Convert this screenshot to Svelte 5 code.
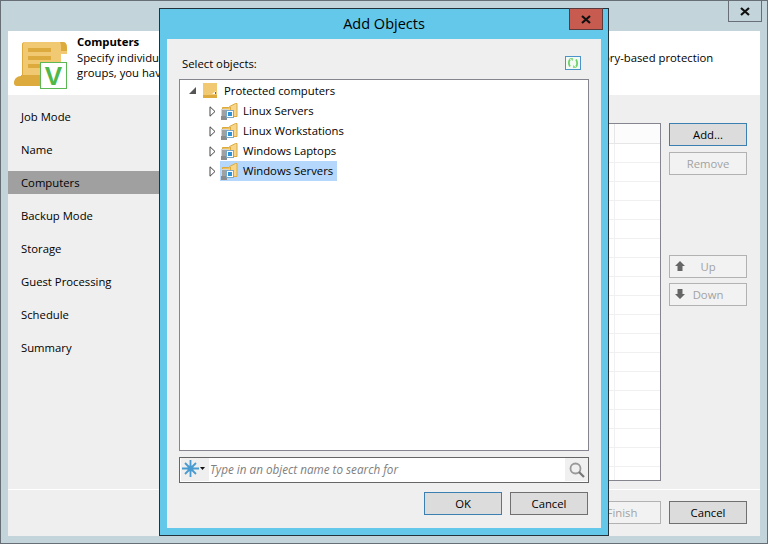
<script>
  const steps = ['Job Mode', 'Name', 'Computers', 'Backup Mode', 'Storage', 'Guest Processing', 'Schedule', 'Summary'];
  const active = 'Computers';
  const groups = ['Linux Servers', 'Linux Workstations', 'Windows Laptops', 'Windows Servers'];
  const rows = Array.from({ length: 18 });
</script>

<div class="window">
  <button class="win-close" aria-label="Close">
    <svg width="10" height="9" viewBox="0 0 10 9"><path d="M1 1l8 7M9 1l-8 7" stroke="#111" stroke-width="2.2" fill="none" /></svg>
  </button>

  <header class="head">
    <svg class="logo" width="56" height="50" viewBox="0 0 56 50">
      <path d="M12 2h38c3 0 4 3 4 6v6h-6v26H9V5c0-2 1-3 3-3z" fill="#f0c972" />
      <path d="M9 5c0-2 1-3 3-3h36c-1 0 -2 0-2 0H12c-1 0-2 1-2 3v33H9z" fill="#dcaa3d" />
      <path d="M47 2h3c3 0 4 3 4 6v3h-6V6c0-2-1-4-1-4z" fill="#dcaa3d" />
      <path d="M1 43c0-4 3-7 7-7v-1h32v11H4c-2 0-3-1-3-3z" fill="#dcaa3d" />
      <path d="M15 8h23v4H15zM15 16h23v4H15zM15 24h14v4H15z" fill="#dcaa3d" />
      <rect x="27.500" y="22.500" width="26" height="26" fill="#fff" stroke="#5bb852" />
      <text x="40.500" y="45" class="logo-v">V</text>
    </svg>
    <div class="head-text">
      <h1>Computers</h1>
      <p>Specify individual computers, Active Directory items or protection groups to back up. In Active Directory-based protection</p>
      <p>groups, you have to select the whole directory container.</p>
    </div>
  </header>

  <div class="body">
    <nav>
      {#each steps as s}
        <div class="step" class:on={s === active}>{s}</div>
      {/each}
    </nav>
    <main>
      <div class="table">
        <div class="trow thead"><div class="cell"></div></div>
        {#each rows as _}
          <div class="trow"><div class="cell"></div></div>
        {/each}
      </div>
      <div class="side">
        <button class="btn focus">Add...</button>
        <button class="btn off">Remove</button>
        <div class="move">
          <button class="btn off arrow">
            <svg width="10" height="10" viewBox="0 0 10 10"><path d="M5 0l5 5H7.500v5h-5V5H0z" fill="#666" /></svg>
            Up
          </button>
          <button class="btn off arrow">
            <svg width="10" height="10" viewBox="0 0 10 10"><path d="M5 10l5-5H7.500V0h-5v5H0z" fill="#666" /></svg>
            Down
          </button>
        </div>
      </div>
    </main>
  </div>

  <footer class="foot">
    <button class="btn off">Finish</button>
    <button class="btn">Cancel</button>
  </footer>

  <div class="dialog">
    <div class="title">Add Objects</div>
    <button class="dlg-close" aria-label="Close">
      <svg width="10" height="9" viewBox="0 0 10 9"><path d="M1 1l8 7M9 1l-8 7" stroke="#111" stroke-width="2.2" fill="none" /></svg>
    </button>
    <div class="panel">
      <div class="label-row">
        <span>Select objects:</span>
        <svg class="refresh" width="16" height="14" viewBox="0 0 16 14">
          <rect x="0.500" y="0.500" width="15" height="13" fill="#f4fbf4" stroke="#4b93c9" />
          <path d="M5 3.500C3.500 5 3.500 8.500 5 10.500M11 3.500C12.500 5.500 12.500 9 11 10.500" stroke="#6fd06a" stroke-width="1.800" fill="none" />
          <path d="M4 2h4v3zM12 12H8V9z" fill="#8fdc8a" />
        </svg>
      </div>

      <div class="tree">
        <div class="node root">
          <svg class="exp" width="7" height="7" viewBox="0 0 7 7"><path d="M7 0v7H0z" fill="#555" /></svg>
          <svg class="root-ic" width="14" height="15" viewBox="0 0 14 15">
            <rect width="14" height="12" fill="#f0c972" />
            <rect y="12" width="14" height="3" fill="#dcaa3d" />
            <path d="M9 11l4-3v3z" fill="#fff" />
            <path d="M12 9h1v2h-1z" fill="#666" />
          </svg>
          <span>Protected computers</span>
        </div>
        {#each groups as g}
          <div class="node child">
            <svg class="tri" width="7" height="11" viewBox="0 0 7 11"><path d="M1 .8L6 5.500 1 10.200z" fill="#fff" stroke="#444" /></svg>
            <div class="label" class:sel={g === 'Windows Servers'}>
              <svg width="17" height="17" viewBox="0 0 17 17">
                <path d="M1.500 4.500h6l1-1 6-3h1.500v13h-14.500z" fill="#f6d68c" stroke="#dcaa3d" />
                <path d="M1.500 5h7l1-1v10" stroke="#dcaa3d" fill="none" />
                <rect x="0" y="6" width="6" height="11" fill="#8c8c8c" />
                <rect x="0" y="6" width="6" height="7" fill="#d4d4d4" />
                <path d="M1 8h4M1 10h4M1 12h4" stroke="#6f6f6f" />
                <rect x="5" y="7" width="8" height="8" fill="#fff" stroke="none" />
                <rect x="5.500" y="7.500" width="7" height="7" fill="#fff" stroke="#7fa8c4" />
                <rect x="7" y="9" width="4" height="4" fill="#2f93d6" />
              </svg>
              <span>{g}</span>
            </div>
          </div>
        {/each}
      </div>

      <div class="search">
        <div class="scope">
          <svg width="17" height="17" viewBox="0 0 17 17">
            <path d="M8.500 0v17M0 8.500h17M3 3l11 11M14 3L3 14" stroke="#4a9bd0" stroke-width="1.800" fill="none" />
            <circle cx="8.500" cy="8.500" r="3" fill="#4a9bd0" />
          </svg>
          <svg width="5" height="3" viewBox="0 0 5 3"><path d="M0 0h5L2.500 3z" fill="#111" /></svg>
        </div>
        <input placeholder="Type in an object name to search for" />
        <div class="go">
          <svg width="16" height="16" viewBox="0 0 16 16">
            <circle cx="6.500" cy="6.500" r="5" fill="none" stroke="#999" stroke-width="1.800" />
            <path d="M10 10l5 5" stroke="#777" stroke-width="2.200" />
          </svg>
        </div>
      </div>

      <div class="actions">
        <button class="btn focus">OK</button>
        <button class="btn">Cancel</button>
      </div>
    </div>
  </div>
</div>

<style>
  :global(body) {
    margin: 0;
    font-family: "Open Sans", "Noto Sans", sans-serif;
    font-size: 11.3px;
    color: #000;
  }
  .window {
    position: relative;
    width: 768px;
    height: 544px;
    box-sizing: border-box;
    padding: 30px 7px 7px;
    background: #c3d5da;
    border: 1px solid #686e75;
    overflow: hidden;
  }
  .win-close {
    position: absolute;
    top: -1px;
    right: 5px;
    width: 34px;
    height: 22px;
    padding: 0;
    display: flex;
    align-items: center;
    justify-content: center;
    background: transparent;
    border: 1px solid #686e75;
  }
  .head {
    height: 64px;
    background: #fff;
    display: flex;
  }
  .logo {
    flex: none;
    margin: 9px 0 0 5px;
  }
  .logo-v {
    font: bold 26px "Liberation Sans", sans-serif;
    fill: #4fb848;
    text-anchor: middle;
  }
  .head-text {
    margin-left: 8px;
    padding-top: 3px;
    white-space: nowrap;
  }
  h1 {
    margin: 0;
    font-size: 11.3px;
    line-height: 16px;
    font-weight: 700;
  }
  p {
    margin: 0;
    line-height: 15px;
  }
  .body {
    height: 394px;
    display: flex;
    background: #efefef;
  }
  nav {
    flex: none;
    width: 152px;
    padding-top: 5px;
  }
  .step {
    height: 33px;
    line-height: 33px;
    padding-left: 13px;
  }
  .step.on {
    background: linear-gradient(#a0a0a0, #a0a0a0) 0 5px / 100% 23px no-repeat;
  }
  main {
    flex: 1;
    display: flex;
    justify-content: flex-end;
    gap: 8px;
    padding: 28px 13px 0 0;
  }
  .table {
    width: 480px;
    height: 358px;
    box-sizing: border-box;
    background: #fff;
    border: 1px solid #84858f;
    overflow: hidden;
  }
  .trow {
    height: 19px;
    box-sizing: border-box;
    border-bottom: 1px solid #f0f0f0;
  }
  .trow.thead {
    height: 20px;
    background: #fcfcfc;
    border-bottom-color: #e6e6e6;
  }
  .cell {
    width: 433px;
    height: 100%;
    box-sizing: border-box;
    border-right: 1px solid #f0f0f0;
  }
  .thead .cell {
    border-right-color: #e6e6e6;
  }
  .side {
    display: flex;
    flex-direction: column;
    gap: 6px;
  }
  .move {
    display: flex;
    flex-direction: column;
    gap: 5px;
    margin-top: 74px;
  }
  .btn {
    width: 78px;
    height: 23px;
    padding: 0;
    box-sizing: border-box;
    font: inherit;
    color: #000;
    background: #dcdcdc;
    border: 1px solid #707070;
  }
  .btn.focus {
    border-color: #3c7fb1;
  }
  .btn.off {
    color: #a2a2a2;
    background: #f2f2f2;
    border-color: #b2b2b2;
  }
  .arrow {
    position: relative;
  }
  .arrow svg {
    position: absolute;
    left: 5px;
    top: 5px;
  }
  .foot {
    height: 47px;
    box-sizing: border-box;
    display: flex;
    justify-content: flex-end;
    gap: 8px;
    padding: 11px 13px 0 0;
    background: #efefef;
    border-top: 1px solid #fff;
  }
  .dialog {
    position: absolute;
    left: 158px;
    top: 7px;
    width: 450px;
    height: 528px;
    box-sizing: border-box;
    display: flex;
    flex-direction: column;
    padding: 0 7px 7px;
    background: #63c8ea;
    border: 1px solid #24323c;
  }
  .title {
    flex: none;
    height: 30px;
    line-height: 29px;
    text-align: center;
    font-size: 14.5px;
  }
  .dlg-close {
    position: absolute;
    top: -1px;
    right: 5px;
    width: 34px;
    height: 22px;
    padding: 0;
    display: flex;
    align-items: center;
    justify-content: center;
    background: #c75b50;
    border: 1px solid #5a3a3a;
  }
  .panel {
    flex: 1;
    display: flex;
    flex-direction: column;
    padding: 0 12px 13px;
    background: #efefef;
  }
  .label-row {
    flex: none;
    height: 40px;
    box-sizing: border-box;
    padding: 17px 8px 0 3px;
    display: flex;
    justify-content: space-between;
    align-items: flex-start;
    line-height: 16px;
  }
  .tree {
    flex: none;
    height: 372px;
    box-sizing: border-box;
    background: #fff;
    border: 1px solid #84858f;
  }
  .node {
    display: flex;
    align-items: center;
    height: 20px;
  }
  .node.root {
    height: 21px;
    padding-bottom: 1px;
    box-sizing: border-box;
  }
  .root .exp {
    margin-left: 9px;
  }
  .root-ic {
    margin-left: 7px;
    margin-right: 7px;
  }
  .child {
    padding-left: 29px;
    gap: 4px;
  }
  .child .tri {
    flex: none;
  }
  .label {
    height: 20px;
    display: flex;
    align-items: center;
    gap: 5px;
    padding: 0 4px 0 1px;
  }
  .label span {
    margin-bottom: 2px;
  }
  .label.sel {
    background: #b5d7fb;
  }
  .search {
    flex: none;
    height: 26px;
    margin-top: 6px;
    box-sizing: border-box;
    display: flex;
    align-items: stretch;
    background: #fff;
    border: 1px solid #666;
  }
  .scope {
    flex: none;
    width: 28px;
    margin: 0 0 1px 1px;
    display: flex;
    align-items: center;
    gap: 1px;
    padding: 0 0 2px 1px;
    box-sizing: border-box;
    background: #efefef;
  }
  input {
    flex: 1;
    min-width: 0;
    padding: 0 2px 2px 1px;
    border: 0;
    outline: 0;
    font: italic 11.7px "Open Sans", "Noto Sans", sans-serif;
    background: transparent;
  }
  input::placeholder {
    color: #808080;
    opacity: 1;
  }
  .go {
    flex: none;
    width: 23px;
    margin-bottom: 1px;
    display: flex;
    align-items: center;
    justify-content: center;
    background: #f0f0f0;
  }
  .actions {
    flex: none;
    display: flex;
    justify-content: flex-end;
    gap: 8px;
    margin-top: 9px;
    padding-right: 1px;
  }
</style>
